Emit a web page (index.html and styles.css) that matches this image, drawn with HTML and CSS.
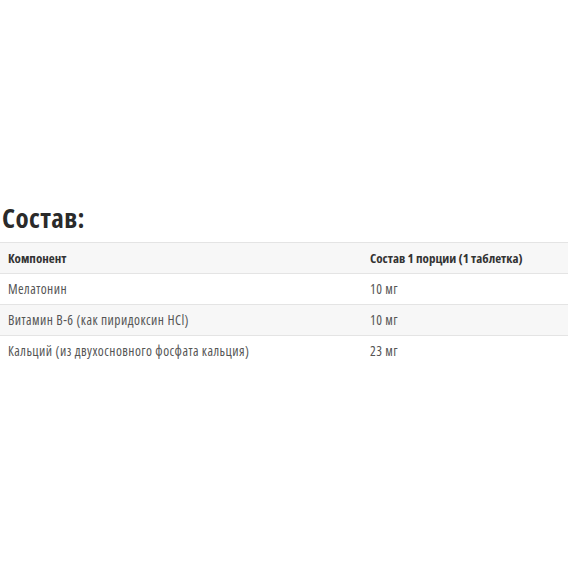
FILE: index.html
```html
<!DOCTYPE html>
<html lang="ru">
<head>
<meta charset="utf-8">
<link rel="stylesheet" href="styles.css">
</head>
<body>
<main class="page">
  <h2 class="title">Состав:</h2>
  <table class="comp">
    <thead>
      <tr><th class="c1">Компонент</th><th>Состав 1 порции (1 таблетка)</th></tr>
    </thead>
    <tbody>
      <tr><td class="c1">Мелатонин</td><td>10 мг</td></tr>
      <tr class="alt"><td class="c1">Витамин B-6 (как пиридоксин HCl)</td><td>10 мг</td></tr>
      <tr class="last"><td class="c1">Кальций (из двухосновного фосфата кальция)</td><td>23 мг</td></tr>
    </tbody>
  </table>
</main>
</body>
</html>
```
FILE: styles.css
```css
html, body { margin: 0; padding: 0; background: #fff; }
body { font-family: "Open Sans", "Noto Sans", sans-serif; color: #444; }
.page { padding-top: 203px; }
.title {
  margin: 0 0 9px 2px;
  font-size: 27px;
  line-height: 30px;
  font-weight: 700;
  font-stretch: 75%;
  letter-spacing: 0.4px;
  color: #2a2a2a;
}
.comp {
  width: 568px;
  border-collapse: collapse;
  font-size: 13px;
}
.comp th, .comp td {
  text-align: left;
  padding: 0 8px;
  height: 30px;
  border-top: 1px solid #e4e4e4;
  vertical-align: middle;
}
.comp th { font-weight: 700; color: #333; background: #f7f7f7; font-stretch: 75%; }
.comp td { color: #555; font-size: 13.5px; font-stretch: 75%; letter-spacing: 0.45px; }
.comp .c1 { width: 346px; }
.comp tr.alt td { background: #f7f7f7; }
```
